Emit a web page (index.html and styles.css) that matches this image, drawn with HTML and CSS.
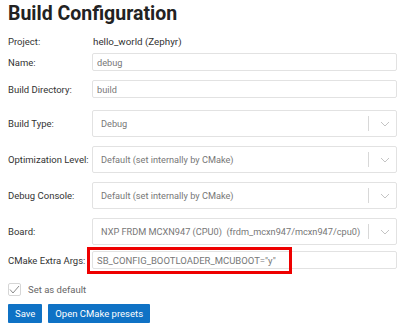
FILE: index.html
```html
<!DOCTYPE html>
<html lang="en">
<head>
  <meta charset="UTF-8">
  <title>Build Configuration</title>
  <link rel="stylesheet" href="styles.css">
</head>
<body>
  <h1 class="title">Build Configuration</h1>

  <div class="form">
    <div class="row row-text">
      <label>Project:</label>
      <span class="value">hello_world (Zephyr)</span>
    </div>

    <div class="row">
      <label>Name:</label>
      <input type="text" class="field" value="debug">
    </div>

    <div class="row">
      <label>Build Directory:</label>
      <input type="text" class="field" value="build">
    </div>

    <div class="row row-first-select">
      <label>Build Type:</label>
      <div class="select">
        <span class="select-text">Debug</span>
        <span class="sep"></span>
        <svg class="chev" width="10" height="6" viewBox="0 0 10 6"><path d="M1 1 L5 5 L9 1" fill="none" stroke="#c4c4c4" stroke-width="1"/></svg>
      </div>
    </div>

    <div class="row">
      <label>Optimization Level:</label>
      <div class="select">
        <span class="select-text">Default (set internally by CMake)</span>
        <span class="sep"></span>
        <svg class="chev" width="10" height="6" viewBox="0 0 10 6"><path d="M1 1 L5 5 L9 1" fill="none" stroke="#c4c4c4" stroke-width="1"/></svg>
      </div>
    </div>

    <div class="row">
      <label>Debug Console:</label>
      <div class="select">
        <span class="select-text">Default (set internally by CMake)</span>
        <span class="sep"></span>
        <svg class="chev" width="10" height="6" viewBox="0 0 10 6"><path d="M1 1 L5 5 L9 1" fill="none" stroke="#c4c4c4" stroke-width="1"/></svg>
      </div>
    </div>

    <div class="row">
      <label>Board:</label>
      <div class="select">
        <span class="select-text">NXP FRDM MCXN947 (CPU0)&nbsp;&nbsp;(frdm_mcxn947/mcxn947/cpu0)</span>
        <span class="sep"></span>
        <svg class="chev" width="10" height="6" viewBox="0 0 10 6"><path d="M1 1 L5 5 L9 1" fill="none" stroke="#c4c4c4" stroke-width="1"/></svg>
      </div>
    </div>

    <div class="row row-args">
      <label>CMake Extra Args:</label>
      <div class="args-wrap">
        <input type="text" class="field field-args" value="SB_CONFIG_BOOTLOADER_MCUBOOT=&quot;y&quot;">
        <span class="mark"></span>
      </div>
    </div>
  </div>

  <div class="check-row">
    <span class="checkbox">
      <svg width="11" height="9" viewBox="0 0 11 9"><path d="M1 4.5 L4 8 L10 1" fill="none" stroke="#8a8a8a" stroke-width="1"/></svg>
    </span>
    <span class="check-label">Set as default</span>
  </div>

  <div class="buttons">
    <button class="btn">Save</button>
    <button class="btn">Open CMake presets</button>
  </div>
</body>
</html>
```

FILE: styles.css
```css
body {
  font-family: Roboto, sans-serif;
  margin: 0;
  padding: 0 3px 0 8px;
  color: #333;
  background: white;
  font-size: 9.5px;
}

.title {
  font-size: 19.5px;
  font-weight: bold;
  color: #222;
  margin: 0;
  line-height: 28px;
}

.form {
  display: flex;
  flex-direction: column;
  gap: 9px;
  margin-top: 5px;
}

.row {
  display: flex;
  align-items: center;
}

.row label {
  width: 84px;
  flex: none;
  white-space: nowrap;
}

.row-text {
  height: 16px;
  margin-bottom: -5px;
}

.value {
  color: #333;
  padding-left: 1px;
  font-size: 9.8px;
}

.field {
  flex: 1;
  height: 18px;
  box-sizing: border-box;
  border: 1px solid #e2e2e2;
  border-radius: 2px;
  padding: 0 4px;
  font-family: inherit;
  font-size: 9.2px;
  color: #777;
  outline: none;
  min-width: 0;
}

.field-args {
  font-size: 9.5px;
}

.row-first-select {
  margin-top: 3px;
}

.select {
  flex: 1;
  min-width: 0;
  height: 27px;
  box-sizing: border-box;
  border: 1px solid #e2e2e2;
  border-radius: 2px;
  display: flex;
  align-items: center;
  padding-left: 8px;
  color: #777;
  font-size: 9.2px;
}

.select-text {
  flex: 1;
  white-space: nowrap;
  overflow: hidden;
}

.sep {
  width: 1px;
  height: 15px;
  background: #d8d8d8;
}

.chev {
  margin: 0 6px 0 11px;
}

.row-args {
  margin-top: -3px;
}

.args-wrap {
  flex: 1;
  display: flex;
  position: relative;
}

.mark {
  position: absolute;
  left: -5px;
  top: -4px;
  width: 205px;
  height: 27px;
  box-sizing: border-box;
  border: 3px solid #ee0000;
}

.check-row {
  display: flex;
  align-items: center;
  margin-top: 14px;
  color: #666;
}

.checkbox {
  width: 13px;
  height: 13px;
  box-sizing: border-box;
  border: 1px solid #d6d6d6;
  border-radius: 2px;
  display: flex;
  align-items: center;
  justify-content: center;
  margin-right: 7px;
}

.buttons {
  display: flex;
  gap: 6px;
  margin-top: 8px;
}

.btn {
  background: #0f72c5;
  color: white;
  border: none;
  border-radius: 1px;
  height: 19px;
  padding: 0 7px;
  font-family: inherit;
  font-size: 9.5px;
  cursor: pointer;
}
```
